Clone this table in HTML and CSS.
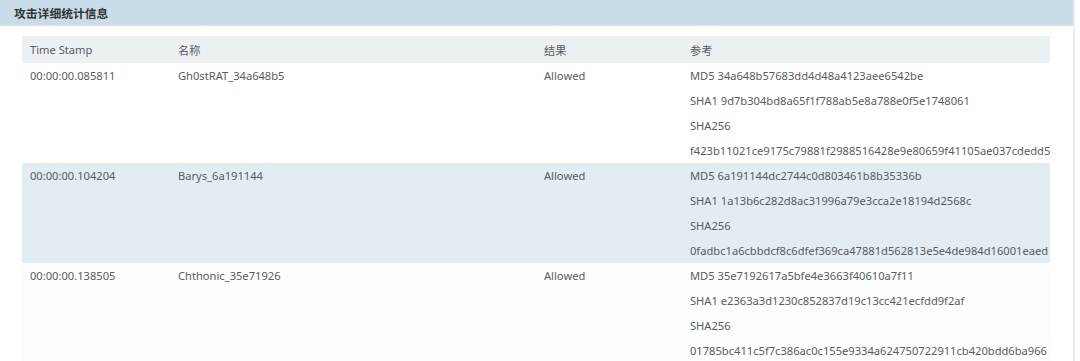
FILE: index.html
```html
<!DOCTYPE html>
<html lang="zh">
<head>
<meta charset="utf-8">
<link rel="stylesheet" href="styles.css">
</head>
<body>
<div class="panel">
  <div class="panel-head">攻击详细统计信息</div>
  <div class="panel-body">
    <table class="stats">
      <colgroup>
        <col class="c-time"><col class="c-name"><col class="c-result"><col class="c-ref">
      </colgroup>
      <thead>
        <tr><th>Time Stamp</th><th>名称</th><th>结果</th><th>参考</th></tr>
      </thead>
      <tbody>
        <tr>
          <td>00:00:00.085811</td><td>Gh0stRAT_34a648b5</td><td>Allowed</td>
          <td class="ref"><div>MD5 34a648b57683dd4d48a4123aee6542be</div><div>SHA1 9d7b304bd8a65f1f788ab5e8a788e0f5e1748061</div><div>SHA256</div><div>f423b11021ce9175c79881f2988516428e9e80659f41105ae037cdedd5</div></td>
        </tr>
        <tr class="alt">
          <td>00:00:00.104204</td><td>Barys_6a191144</td><td>Allowed</td>
          <td class="ref"><div>MD5 6a191144dc2744c0d803461b8b35336b</div><div>SHA1 1a13b6c282d8ac31996a79e3cca2e18194d2568c</div><div>SHA256</div><div>0fadbc1a6cbbdcf8c6dfef369ca47881d562813e5e4de984d16001eaed</div></td>
        </tr>
        <tr class="last">
          <td>00:00:00.138505</td><td>Chthonic_35e71926</td><td>Allowed</td>
          <td class="ref"><div>MD5 35e7192617a5bfe4e3663f40610a7f11</div><div>SHA1 e2363a3d1230c852837d19c13cc421ecfdd9f2af</div><div>SHA256</div><div>01785bc411c5f7c386ac0c155e9334a624750722911cb420bdd6ba966</div></td>
        </tr>
      </tbody>
    </table>
  </div>
</div>
</body>
</html>
```
FILE: styles.css
```css
html, body {
  margin: 0;
  padding: 0;
  background: #ffffff;
}
body {
  font-family: "Noto Sans", "Noto Sans CJK SC", sans-serif;
  font-size: 11.15px;
  color: #585c60;
}
.panel {
  width: 1073px;
  height: 361px;
  border-right: 2px solid #e6eef3;
  overflow: hidden;
}
.panel-head {
  height: 26px;
  line-height: 26px;
  background: #c9dde8;
  border-bottom: 1px solid #d7e6ee;
  box-sizing: border-box;
  padding-left: 14px;
  font-weight: bold;
  font-size: 11.8px;
  color: #2f3538;
  font-family: "Noto Sans CJK SC", "Noto Sans", sans-serif;
}
.panel-body {
  padding: 10px 0 0 22px;
}
.stats {
  width: 1028px;
  border-collapse: collapse;
  table-layout: fixed;
}
.c-time { width: 148px; }
.c-name { width: 366px; }
.c-result { width: 146px; }
.c-ref { width: 368px; }
.stats th {
  height: 27px;
  padding: 0 0 0 8px;
  text-align: left;
  font-weight: normal;
  background: #ebf0f3;
  color: #585c60;
  font-family: "Noto Sans", "Noto Sans CJK SC", sans-serif;
}
.stats td {
  padding: 0 0 0 8px;
  vertical-align: top;
  line-height: 25px;
  height: 100px;
  white-space: nowrap;
  overflow: hidden;
}
.stats tr.alt td {
  background: #e2edf2;
}
.stats tr.last td {
  background: #fcfdfe;
}
.ref div {
  height: 25px;
  overflow: hidden;
  white-space: nowrap;
}
```
